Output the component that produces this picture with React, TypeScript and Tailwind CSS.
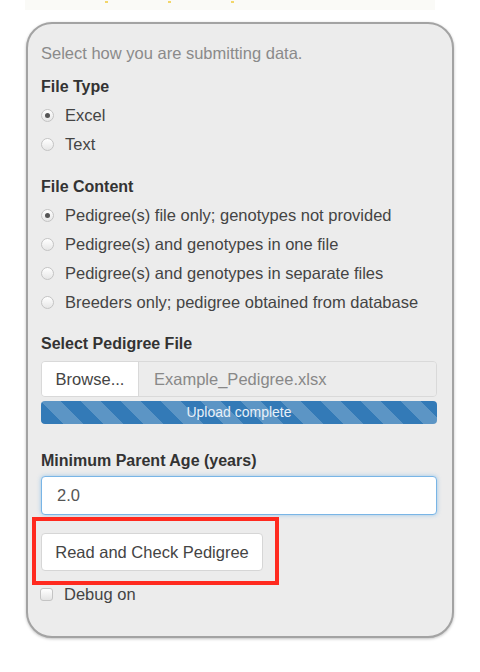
const Radio = ({ checked, label }: { checked?: boolean; label: string }) => (
  <label className="flex items-center h-[29px]">
    <span className="w-[13px] h-[13px] rounded-full border border-[#c4c4c4] bg-gradient-to-b from-[#ffffff] to-[#e6e6e6] flex items-center justify-center ml-[-1px]">
      {checked && <span className="w-[5px] h-[5px] rounded-full bg-[#555]" />}
    </span>
    <span className="ml-[11px] text-[16.5px] text-[#444]">{label}</span>
  </label>
);

export default function App() {
  return (
    <div className="w-[480px] h-[672px] bg-white relative font-['Liberation_Sans',Arial,sans-serif]">
      <div className="ml-[25px] w-[410px] h-[10px] bg-[#fafaf7] flex items-start gap-[60px] pl-[80px]">
        <span className="w-[3px] h-[2px] bg-[#f2d66a] mt-[1px]" />
        <span className="w-[3px] h-[2px] bg-[#f2d66a] mt-[1px]" />
        <span className="w-[3px] h-[2px] bg-[#f2d66a] mt-[1px]" />
      </div>
      <div className="ml-[26px] mt-[12px] w-[428px] h-[616px] rounded-[26px] border-2 border-[#a3a3a3] bg-[#ececec] shadow-[0_1px_3px_rgba(0,0,0,0.25)] px-[13px] pt-[19px]">
        <p className="text-[16.5px] text-[#8a8a8a] leading-[20px]">Select how you are submitting data.</p>
        <p className="mt-[14px] text-[16px] font-bold text-[#333] leading-[20px]">File Type</p>
        <div className="mt-[4px] pl-[1px]">
          <Radio checked label="Excel" />
          <Radio label="Text" />
        </div>
        <p className="mt-[18px] text-[16px] font-bold text-[#333] leading-[20px]">File Content</p>
        <div className="mt-[4px] pl-[1px]">
          <Radio checked label="Pedigree(s) file only; genotypes not provided" />
          <Radio label="Pedigree(s) and genotypes in one file" />
          <Radio label="Pedigree(s) and genotypes in separate files" />
          <Radio label="Breeders only; pedigree obtained from database" />
        </div>
        <p className="mt-[17px] text-[16px] font-bold text-[#333] leading-[20px]">Select Pedigree File</p>
        <div className="mt-[7px] w-[396px] h-[36px] flex rounded-[4px] border border-[#d9d9d9] overflow-hidden">
          <div className="w-[97px] bg-white border-r border-[#d9d9d9] flex items-center justify-center text-[16.5px] text-[#444]">
            Browse...
          </div>
          <div className="flex-1 bg-[#ececec] flex items-center pl-[15px] text-[16.5px] text-[#888]">
            Example_Pedigree.xlsx
          </div>
        </div>
        <div className="mt-[4px] w-[396px] h-[23px] rounded-[4px] bg-[#337ab7] bg-[linear-gradient(45deg,rgba(255,255,255,0.2)_25%,transparent_25%,transparent_50%,rgba(255,255,255,0.2)_50%,rgba(255,255,255,0.2)_75%,transparent_75%,transparent)] bg-[length:40px_40px] flex items-center justify-center text-[14px] text-[#e8f0f8]">
          Upload complete
        </div>
        <p className="mt-[27px] text-[16px] font-bold text-[#333] leading-[20px]">Minimum Parent Age (years)</p>
        <div className="mt-[5px] w-[396px] h-[39px] bg-white rounded-[4px] border border-[#79b5e6] shadow-[0_0_4px_rgba(102,175,233,0.6)] flex items-center pl-[15px] text-[16.5px] text-[#555]">
          2.0
        </div>
        <div className="mt-[2px] ml-[-9px] w-[247px] h-[68px] border-[4px] border-[#ff2a1f] pt-[12px] pl-[5px]">
          <div className="w-[222px] h-[38px] bg-white rounded-[4px] border border-[#d6d6d6] flex items-center justify-center text-[16.5px] text-[#444]">
            Read and Check Pedigree
          </div>
        </div>
        <label className="mt-[-1px] flex items-center h-[20px]">
          <span className="w-[13px] h-[13px] rounded-[3px] border border-[#c4c4c4] bg-gradient-to-b from-[#ffffff] to-[#e4e4e4] ml-[-1px]" />
          <span className="ml-[11px] text-[16.5px] text-[#444]">Debug on</span>
        </label>
      </div>
    </div>
  );
}
